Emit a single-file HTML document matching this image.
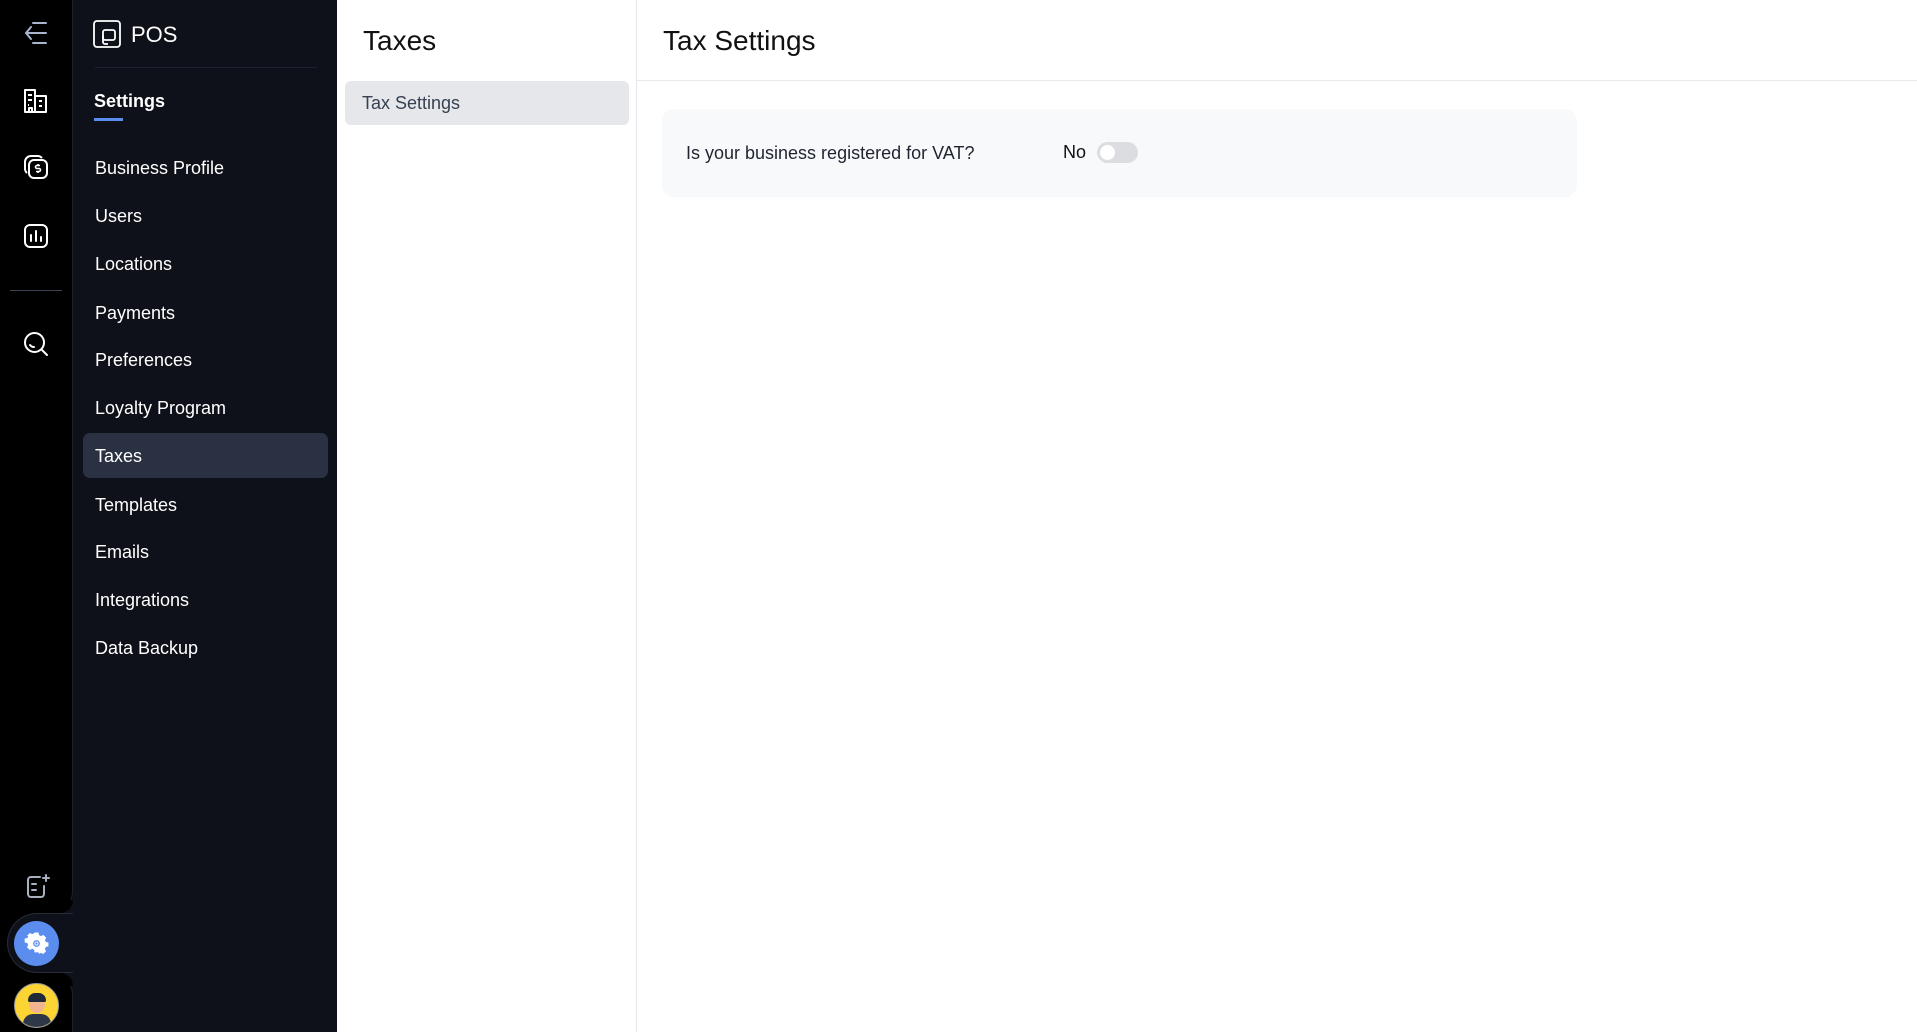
<!DOCTYPE html>
<html><head><meta charset="utf-8"><style>
*{margin:0;padding:0;box-sizing:border-box}
body{width:1917px;height:1032px;overflow:hidden;background:#fff;font-family:"Liberation Sans",sans-serif;position:relative}
.abs{position:absolute}
.side{left:0;top:0;width:337px;height:1032px;background:#0e111a}
.nav{position:absolute;left:95px;color:#fff;font-size:18px;line-height:22px}
svg{position:absolute}
</style></head><body>
<div class="abs side"></div>
<div class="abs" style="left:0;top:0;width:73px;height:913px;background:#000;border-bottom-right-radius:22px;border-right:1px solid #1c212c"></div>
<div class="abs" style="left:0;top:973px;width:73px;height:59px;background:#000;border-top-right-radius:22px;border-right:1px solid #1c212c"></div>
<div class="abs" style="left:0;top:900px;width:40px;height:90px;background:#000"></div>
<div class="abs" style="left:0;top:900px;width:40px;height:13px;background:#000"></div>
<div class="abs" style="left:7px;top:913px;width:66px;height:60px;background:#0e111a;border-radius:30px 0 0 30px;border:1px solid #262b36;border-right:none"></div>
<div class="abs" style="left:50px;top:900px;width:23px;height:13px;background:#000;border-bottom-right-radius:13px"></div>
<div class="abs" style="left:50px;top:973px;width:23px;height:13px;background:#000;border-top-right-radius:13px"></div>
<div class="abs" style="left:73px;top:913px;width:1px;height:60px;background:#0e111a"></div>
<svg style="left:22px;top:20px" width="28" height="28" viewBox="0 0 28 28" fill="none" stroke="#a8b4d0" stroke-width="2" stroke-linecap="round"><path d="M9 7L4 13l5 6M4 13h20M11 3h13M11 23h13"/></svg>
<svg style="left:22px;top:87px" width="28" height="28" viewBox="0 0 28 28" fill="none" stroke="#fff" stroke-width="2" stroke-linejoin="round"><path d="M3 25V3h10v22zM13 9h11v16H3M6 8h4M6 13h4M6 18h1M17 14h3M17 19h3M7 25v-4h3v4"/></svg>
<svg style="left:22px;top:153px" width="28" height="28" viewBox="0 0 28 28" fill="none" stroke="#fff" stroke-width="2"><rect x="7" y="7" width="18" height="18" rx="5"/><path d="M5 20A6 6 0 0 1 3 15V9a6 6 0 0 1 6-6h6a6 6 0 0 1 5 2"/><path d="M18 12.5h-3a1.5 1.5 0 0 0 0 3h2a1.5 1.5 0 0 1 0 3h-3M16 11v1.5M16 18.5V20" stroke-width="1.6"/></svg>
<svg style="left:22px;top:222px" width="28" height="28" viewBox="0 0 28 28" fill="none" stroke="#fff" stroke-width="2" stroke-linecap="round"><rect x="3" y="3" width="22" height="22" rx="5"/><path d="M9 13v6M14 9v10M19 15v4"/></svg>
<div class="abs" style="left:10px;top:290px;width:52px;height:1px;background:#3a4150"></div>
<svg style="left:22px;top:330px" width="28" height="28" viewBox="0 0 28 28" fill="none" stroke="#fff" stroke-width="2" stroke-linecap="round"><circle cx="12.5" cy="12.5" r="9.5"/><path d="M20 20l5 5M8 15a5 5 0 0 0 4 2"/></svg>
<svg style="left:24px;top:873px" width="28" height="28" viewBox="0 0 28 28" fill="none" stroke="#a8b0c0" stroke-width="2" stroke-linecap="round"><path d="M16 4H7a3 3 0 0 0-3 3v14a3 3 0 0 0 3 3h10a3 3 0 0 0 3-3v-8M8 11h4M8 17h4M22 2v6M19 5h6"/></svg>
<div class="abs" style="left:14px;top:921px;width:45px;height:45px;border-radius:50%;background:#5b8def"></div>
<svg style="left:23px;top:930px" width="27" height="27" viewBox="0 0 24 24"><path fill="#fff" d="M10 2h4l.5 2.6 2 1 2.4-1.2 2.8 2.8-1.2 2.4 1 2 2.5.4v4l-2.6.5-1 2 1.2 2.4-2.8 2.8-2.4-1.2-2 1L14 22h-4l-.5-2.6-2-1-2.4 1.2-2.8-2.8 1.2-2.4-1-2L0 12v-0 0-4l2.6-.4 1-2L2.4 5.2 5.2 2.4l2.4 1.2 2-1z" transform="translate(1.5 .5) scale(.88)"/><circle cx="12" cy="12" r="3" fill="#5b8def"/><circle cx="12" cy="12" r="1.8" fill="#fff"/><circle cx="12" cy="12" r="1" fill="#5b8def"/></svg>
<div class="abs" style="left:14px;top:983px;width:45px;height:45px;border-radius:50%;background:#fcd535;border:1px solid #999;overflow:hidden">
 <div class="abs" style="left:8px;top:30px;width:28px;height:20px;border-radius:10px 10px 0 0;background:#2d3748"></div>
 <div class="abs" style="left:14px;top:12px;width:16px;height:17px;border-radius:50%;background:#f2b38f"></div>
 <div class="abs" style="left:13px;top:9px;width:18px;height:9px;border-radius:9px 9px 2px 2px;background:#1f2937"></div>
</div>
<svg style="left:93px;top:20px" width="28" height="28" viewBox="0 0 28 28" fill="none" stroke="#fff" stroke-width="1.8"><rect x="1" y="1" width="26" height="26" rx="3"/><rect x="10" y="10" width="12" height="10" rx="2"/><path d="M10 15v7a2 2 0 0 0 2 2h3"/></svg>
<div class="abs" style="left:131px;top:22px;color:#fff;font-size:22px">POS</div>
<div class="abs" style="left:95px;top:67px;width:222px;height:1px;background:#1e2330"></div>
<div class="abs" style="left:94px;top:91px;color:#fff;font-size:18px;font-weight:bold">Settings</div>
<div class="abs" style="left:94px;top:118px;width:29px;height:3px;background:#5b8def"></div>
<div class="abs" style="left:83px;top:433px;width:245px;height:45px;background:#2a3142;border-radius:7px"></div>
<div class="nav" style="top:157px">Business Profile</div>
<div class="nav" style="top:205px">Users</div>
<div class="nav" style="top:253px">Locations</div>
<div class="nav" style="top:302px">Payments</div>
<div class="nav" style="top:349px">Preferences</div>
<div class="nav" style="top:397px">Loyalty Program</div>
<div class="nav" style="top:445px">Taxes</div>
<div class="nav" style="top:494px">Templates</div>
<div class="nav" style="top:541px">Emails</div>
<div class="nav" style="top:589px">Integrations</div>
<div class="nav" style="top:637px">Data Backup</div>
<div class="abs" style="left:636px;top:0;width:1px;height:1032px;background:#e5e7eb"></div>
<div class="abs" style="left:363px;top:25px;font-size:28px;color:#111">Taxes</div>
<div class="abs" style="left:345px;top:81px;width:284px;height:44px;background:#e5e7eb;border-radius:6px"></div>
<div class="abs" style="left:362px;top:93px;font-size:18px;color:#374151">Tax Settings</div>
<div class="abs" style="left:663px;top:25px;font-size:28px;color:#111">Tax Settings</div>
<div class="abs" style="left:637px;top:80px;width:1280px;height:1px;background:#e8e9ec"></div>
<div class="abs" style="left:662px;top:109px;width:915px;height:88px;background:#f8f9fb;border-radius:12px"></div>
<div class="abs" style="left:686px;top:143px;font-size:18px;color:#1f2430">Is your business registered for VAT?</div>
<div class="abs" style="left:1063px;top:142px;font-size:18px;color:#111">No</div>
<div class="abs" style="left:1097px;top:142px;width:41px;height:21px;background:#dcdde0;border-radius:11px"></div>
<div class="abs" style="left:1100px;top:145px;width:15px;height:15px;background:#fff;border-radius:50%"></div>
</body></html>
